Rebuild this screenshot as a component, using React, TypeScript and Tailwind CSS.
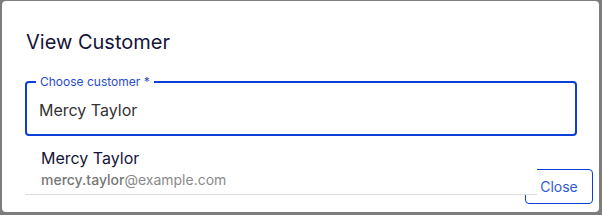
export default function App() {
  return (
    <div className="h-[215px] w-[602px] bg-[#7d7d7d] pt-px pl-[2px] pr-[3px] pb-[3px] font-['Inter','Noto_Sans',sans-serif]">
      <div className="relative h-full w-full rounded-[4px] bg-white">
        <h2 className="px-6 pt-[25px] text-[20px] leading-8 text-[#14143a]">View Customer</h2>
        <div className="mt-[23px] ml-[23px] mr-[22px]">
          <div className="relative h-[55px] rounded-[4px] border-2 border-[#0b3fd6]">
            <span className="absolute -top-[9px] left-[9px] bg-white px-[4px] text-[12px] leading-4 text-[#2a4bc7]">
              Choose customer *
            </span>
            <div className="px-[12px] pt-[17px] text-[16px] leading-5 text-[#333]">Mercy Taylor</div>
          </div>
        </div>
        <div className="flex justify-end pr-[6px] pt-[33px]">
          <button
            type="button"
            className="h-[35px] w-[68px] rounded-[4px] border border-[#0b3fd6] text-[14px] text-[#2f5bd6]"
          >
            Close
          </button>
        </div>
        <div className="absolute left-[23px] top-[137px] h-[57px] w-[512px] border-b border-[#dcdcdc] bg-white px-[16px] pt-[10px]">
          <div className="text-[16px] leading-5 text-[#14143a]">Mercy Taylor</div>
          <div className="mt-[2px] text-[14px] leading-5 text-[#8a8a8a]">
            <span className="font-medium text-[#777]">mercy.taylor</span>@example.com
          </div>
        </div>
      </div>
    </div>
  );
}
